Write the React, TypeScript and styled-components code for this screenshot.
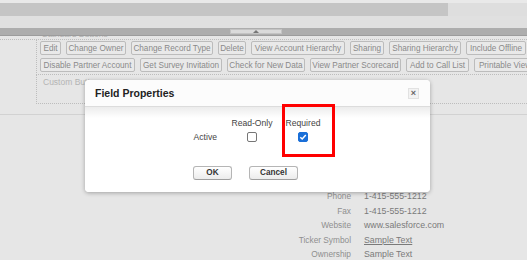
import styled, { createGlobalStyle } from "styled-components";

const Global = createGlobalStyle`
  html, body {
    margin: 0;
    padding: 0;
    background: #e6e6e6;
  }
  body {
    font-family: "Liberation Sans", Arial, sans-serif;
  }
`;

const Page = styled.div`
  position: relative;
  width: 527px;
  height: 260px;
  overflow: hidden;
  background: #e6e6e6;
`;

// top chrome (scrollbar + splitter)
const TopStrip = styled.div`
  height: 3px;
  background: #e9e9e9;
`;

const ScrollRow = styled.div`
  display: flex;
  height: 13px;
`;

const ScrollThumb = styled.div`
  width: 448px;
  background: #c5c5c5;
`;

const ScrollTrack = styled.div`
  flex: 1;
  background: #dedede;
`;

const Band = styled.div`
  height: 12px;
  background: #e0e0e0;
`;

const Splitter = styled.div`
  height: 8px;
  box-sizing: border-box;
  background: #adadad;
  border-bottom: 1px solid #9c9c9c;
  padding: 1px 0 0 230px;
`;

const Handle = styled.div`
  width: 52px;
  height: 5px;
  box-sizing: border-box;
  background: #dadada;
  border: 1px solid #c3c3c3;
  display: flex;
  justify-content: center;
  align-items: flex-end;
`;

const Arrow = styled.div`
  width: 0;
  height: 0;
  border-left: 3px solid transparent;
  border-right: 3px solid transparent;
  border-bottom: 3px solid #777;
`;

// page content behind the dialog
const Content = styled.div`
  overflow: hidden;
  height: 224px;
`;

const SectionLabel = styled.div<{ $top?: number }>`
  font-size: 8.5px;
  line-height: 10px;
  height: 10px;
  color: #b4b4b4;
  padding-left: 6px;
  margin-top: ${(p) => p.$top ?? 0}px;
  white-space: nowrap;
`;

const TopLabel = styled(SectionLabel)`
  padding-left: 42px;
`;

const DottedRule = styled.div`
  border-top: 1px dotted #bdbdbd;
`;

const Fieldset = styled.div`
  margin-left: 36px;
  border-left: 1px dotted #bdbdbd;
  border-bottom: 1px dotted #bdbdbd;
  padding: 1px 0 2px 3px;
  display: flex;
  flex-direction: column;
  gap: 3px;
`;

const ButtonRow = styled.div`
  display: flex;
  gap: 5px;
  flex-wrap: nowrap;
  white-space: nowrap;
`;

const PageButton = styled.span<{ $w: number }>`
  flex: none;
  width: ${(p) => p.$w}px;
  height: 14px;
  box-sizing: border-box;
  display: inline-flex;
  align-items: center;
  justify-content: center;
  border: 1px solid #bcbcbc;
  border-radius: 2px;
  background: #e9e9e9;
  color: #8a8a8a;
  font-size: 8.2px;
  overflow: hidden;
`;

const CustomBox = styled.div`
  margin-left: 36px;
  height: 26px;
  border-left: 1px dotted #bdbdbd;
  border-bottom: 1px dotted #bdbdbd;
  padding-top: 2px;
`;

const SolidRule = styled.div`
  margin-top: 10px;
  border-top: 1px solid #d2d2d2;
`;

const Details = styled.div`
  margin-top: 74px;
  display: grid;
  grid-template-columns: 351px auto;
  column-gap: 13px;
  grid-auto-rows: 14.5px;
  align-items: center;
  white-space: nowrap;
`;

const DetailLabel = styled.div`
  text-align: right;
  font-size: 8.3px;
  color: #8f8f8f;
`;

const DetailValue = styled.div<{ $link?: boolean }>`
  font-size: 8.8px;
  color: #7a7a7a;
  text-decoration: ${(p) => (p.$link ? "underline" : "none")};
`;

// dialog
const Modal = styled.div`
  position: absolute;
  left: 85px;
  top: 80px;
  width: 345px;
  height: 112px;
  background: #fff;
  border-radius: 4px;
  box-shadow: 0 1px 4px rgba(0, 0, 0, 0.3);
  display: flex;
  flex-direction: column;
  overflow: hidden;
`;

const ModalHeader = styled.div`
  height: 27px;
  box-sizing: border-box;
  display: flex;
  align-items: center;
  justify-content: space-between;
  padding: 0 11px 0 10px;
  border-bottom: 1px solid #dcdcdc;
  background: #fcfcfc;
`;

const Title = styled.h2`
  margin: 0;
  font-size: 10.5px;
  font-weight: bold;
  color: #222;
`;

const Close = styled.span`
  width: 11px;
  height: 11px;
  box-sizing: border-box;
  border: 1px solid #e2e2e2;
  background: #f3f3f3;
  display: flex;
  align-items: center;
  justify-content: center;
  font-size: 9px;
  font-weight: bold;
  color: #666;
  line-height: 1;
`;

const ModalBody = styled.div`
  flex: 1;
  padding-top: 9px;
  background: linear-gradient(#ececec, #ffffff 11px);
`;

const PropGrid = styled.div`
  display: grid;
  grid-template-columns: 142px 50px 52px;
  grid-auto-rows: 14px;
  align-items: center;
  font-size: 8.6px;
  color: #444;
`;

const RowLabel = styled.div`
  text-align: right;
  padding-right: 10px;
`;

const ColHead = styled.div`
  text-align: center;
  white-space: nowrap;
`;

const Cell = styled.div`
  display: flex;
  justify-content: center;
`;

const Check = styled.span<{ $on?: boolean }>`
  width: 10px;
  height: 10px;
  box-sizing: border-box;
  border-radius: 2px;
  border: 1px solid ${(p) => (p.$on ? "#1a6fd8" : "#767676")};
  background: ${(p) => (p.$on ? "#1a6fd8" : "#fff")};
  display: flex;
  align-items: center;
  justify-content: center;
`;

const Actions = styled.div`
  display: flex;
  gap: 17px;
  padding-left: 108px;
  margin-top: 22px;
`;

const DialogButton = styled.button<{ $w: number }>`
  width: ${(p) => p.$w}px;
  height: 14px;
  padding: 0;
  box-sizing: border-box;
  border: 1px solid #b5b5b5;
  border-bottom-color: #9f9f9f;
  border-radius: 3px;
  background: linear-gradient(#ffffff, #ececec);
  font-family: "Liberation Sans", Arial, sans-serif;
  font-size: 8.2px;
  font-weight: bold;
  color: #333;
  line-height: 12px;
`;

const Highlight = styled.div`
  position: absolute;
  left: 197px;
  top: 24px;
  width: 53px;
  height: 53px;
  box-sizing: border-box;
  border: 3px solid #ff0000;
`;

const row1 = [
  { t: "Edit", w: 21 },
  { t: "Change Owner", w: 60 },
  { t: "Change Record Type", w: 82 },
  { t: "Delete", w: 28 },
  { t: "View Account Hierarchy", w: 94 },
  { t: "Sharing", w: 34 },
  { t: "Sharing Hierarchy", w: 72 },
  { t: "Include Offline", w: 60 },
];

const row2 = [
  { t: "Disable Partner Account", w: 95 },
  { t: "Get Survey Invitation", w: 82 },
  { t: "Check for New Data", w: 78 },
  { t: "View Partner Scorecard", w: 91 },
  { t: "Add to Call List", w: 63 },
  { t: "Printable View", w: 62 },
];

const details = [
  { label: "Phone", value: "1-415-555-1212" },
  { label: "Fax", value: "1-415-555-1212" },
  { label: "Website", value: "www.salesforce.com" },
  { label: "Ticker Symbol", value: "Sample Text", link: true },
  { label: "Ownership", value: "Sample Text" },
];

const App = () => {
  return (
    <>
      <Global />
      <Page>
        <TopStrip />
        <ScrollRow>
          <ScrollThumb />
          <ScrollTrack />
        </ScrollRow>
        <Band />
        <Splitter>
          <Handle>
            <Arrow />
          </Handle>
        </Splitter>

        <Content>
          <TopLabel $top={-7}>Standard Buttons</TopLabel>
          <DottedRule />
          <Fieldset>
            <ButtonRow>
              {row1.map((b) => (
                <PageButton key={b.t} $w={b.w}>
                  {b.t}
                </PageButton>
              ))}
            </ButtonRow>
            <ButtonRow>
              {row2.map((b) => (
                <PageButton key={b.t} $w={b.w}>
                  {b.t}
                </PageButton>
              ))}
            </ButtonRow>
          </Fieldset>
          <CustomBox>
            <SectionLabel>Custom Buttons</SectionLabel>
          </CustomBox>
          <SolidRule />
          <Details>
            {details.map((d) => [
              <DetailLabel key={d.label}>{d.label}</DetailLabel>,
              <DetailValue key={d.label + "v"} $link={d.link}>
                {d.value}
              </DetailValue>,
            ])}
          </Details>
        </Content>

        <Modal>
          <ModalHeader>
            <Title>Field Properties</Title>
            <Close>×</Close>
          </ModalHeader>
          <ModalBody>
            <PropGrid>
              <div />
              <ColHead>Read-Only</ColHead>
              <ColHead>Required</ColHead>
              <RowLabel>Active</RowLabel>
              <Cell>
                <Check />
              </Cell>
              <Cell>
                <Check $on>
                  <svg width="8" height="8" viewBox="0 0 8 8">
                    <path
                      d="M1.3 4.2 L3.2 6 L6.8 1.9"
                      fill="none"
                      stroke="#fff"
                      strokeWidth="1.5"
                    />
                  </svg>
                </Check>
              </Cell>
            </PropGrid>
            <Actions>
              <DialogButton $w={39}>OK</DialogButton>
              <DialogButton $w={49}>Cancel</DialogButton>
            </Actions>
          </ModalBody>
          <Highlight />
        </Modal>
      </Page>
    </>
  );
};

export default App;
